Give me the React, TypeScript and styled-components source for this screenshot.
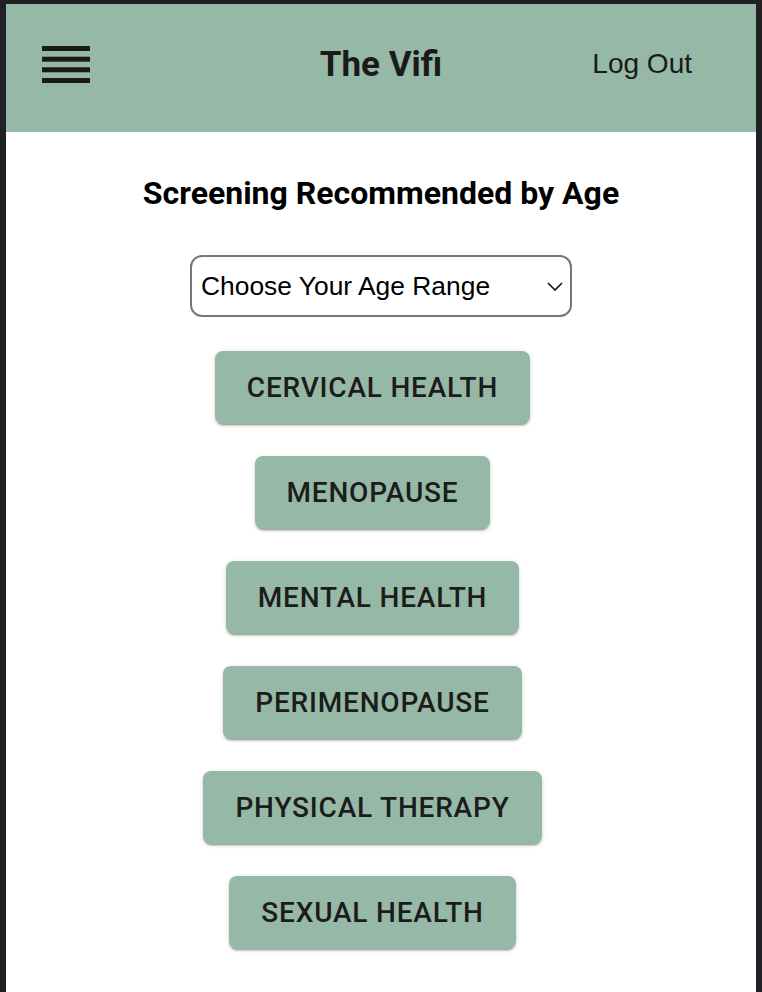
import React from 'react';
import styled, { createGlobalStyle } from 'styled-components';

const GlobalStyle = createGlobalStyle`
  html, body {
    margin: 0;
    padding: 0;
    background-color: #202124;
  }
  body {
    font-family: Roboto, "Liberation Sans", Arial, sans-serif;
  }
`;

const Frame = styled.div`
  padding: 4px 6px 0 6px;
  min-height: 992px;
  box-sizing: border-box;
`;

const Page = styled.div`
  background-color: #ffffff;
  min-height: 988px;
`;

const Header = styled.header`
  display: grid;
  grid-template-columns: 1fr auto 1fr;
  align-items: center;
  height: 128px;
  padding: 0 36px 8px;
  box-sizing: border-box;
  background-color: #96b9a7;
`;

const MenuButton = styled.button`
  justify-self: start;
  display: flex;
  padding: 0;
  border: none;
  background: none;
  cursor: pointer;
`;

const Title = styled.h1`
  margin: 0;
  font-family: Roboto, sans-serif;
  font-weight: 700;
  font-size: 35px;
  color: #1a1a1a;
`;

const LogOut = styled.a`
  justify-self: end;
  margin-right: 28px;
  font-family: "Liberation Sans", Arial, sans-serif;
  font-size: 28px;
  color: #1a1a1a;
  text-decoration: none;
  cursor: pointer;
`;

const Main = styled.main`
  display: flex;
  flex-direction: column;
  align-items: center;
  padding-top: 39px;
`;

const Heading = styled.h2`
  margin: 0 0 40px;
  font-family: Roboto, sans-serif;
  font-weight: 700;
  font-size: 32px;
  line-height: 44px;
  color: #000000;
`;

const SelectWrap = styled.div`
  position: relative;
  margin-bottom: 34px;
`;

const AgeSelect = styled.select`
  appearance: none;
  width: 382px;
  height: 62px;
  padding: 0 44px 0 9px;
  border: 2px solid #777777;
  border-radius: 12px;
  background: #ffffff;
  font-family: "Liberation Sans", Arial, sans-serif;
  font-size: 26.4px;
  color: #000000;
  box-sizing: border-box;
`;

const Chevron = styled.svg`
  position: absolute;
  right: 9px;
  top: 27px;
  pointer-events: none;
`;

const TopicList = styled.div`
  display: flex;
  flex-direction: column;
  align-items: center;
  gap: 32px;
  padding-right: 17px;
`;

const TopicButton = styled.button`
  display: inline-flex;
  align-items: center;
  justify-content: center;
  height: 73px;
  padding: 0 32px;
  border: none;
  border-radius: 8px;
  background-color: #96b9a7;
  color: #1c1c1c;
  font-family: Roboto, sans-serif;
  font-weight: 500;
  font-size: 28px;
  letter-spacing: 0.8px;
  text-transform: uppercase;
  box-shadow: 0px 3px 1px -2px rgba(0, 0, 0, 0.2),
    0px 2px 2px 0px rgba(0, 0, 0, 0.14), 0px 1px 5px 0px rgba(0, 0, 0, 0.12);
  cursor: pointer;
`;

const topics = [
  'Cervical Health',
  'Menopause',
  'Mental Health',
  'Perimenopause',
  'Physical Therapy',
  'Sexual Health',
];

export default function App() {
  return (
    <>
      <GlobalStyle />
      <Frame>
        <Page>
          <Header>
            <MenuButton aria-label="menu">
              <svg width="48" height="37" viewBox="0 0 48 37">
                <rect x="0" y="0" width="48" height="5" fill="#1a1a1a" />
                <rect x="0" y="10.7" width="48" height="5" fill="#1a1a1a" />
                <rect x="0" y="21.3" width="48" height="5" fill="#1a1a1a" />
                <rect x="0" y="32" width="48" height="5" fill="#1a1a1a" />
              </svg>
            </MenuButton>
            <Title>The Vifi</Title>
            <LogOut>Log Out</LogOut>
          </Header>
          <Main>
            <Heading>Screening Recommended by Age</Heading>
            <SelectWrap>
              <AgeSelect defaultValue="">
                <option value="" disabled>
                  Choose Your Age Range
                </option>
              </AgeSelect>
              <Chevron width="16" height="9" viewBox="0 0 16 9">
                <path d="M1 1l7 7 7-7" fill="none" stroke="#111" strokeWidth="1.6" />
              </Chevron>
            </SelectWrap>
            <TopicList>
              {topics.map((t) => (
                <TopicButton key={t}>{t}</TopicButton>
              ))}
            </TopicList>
          </Main>
        </Page>
      </Frame>
    </>
  );
}
